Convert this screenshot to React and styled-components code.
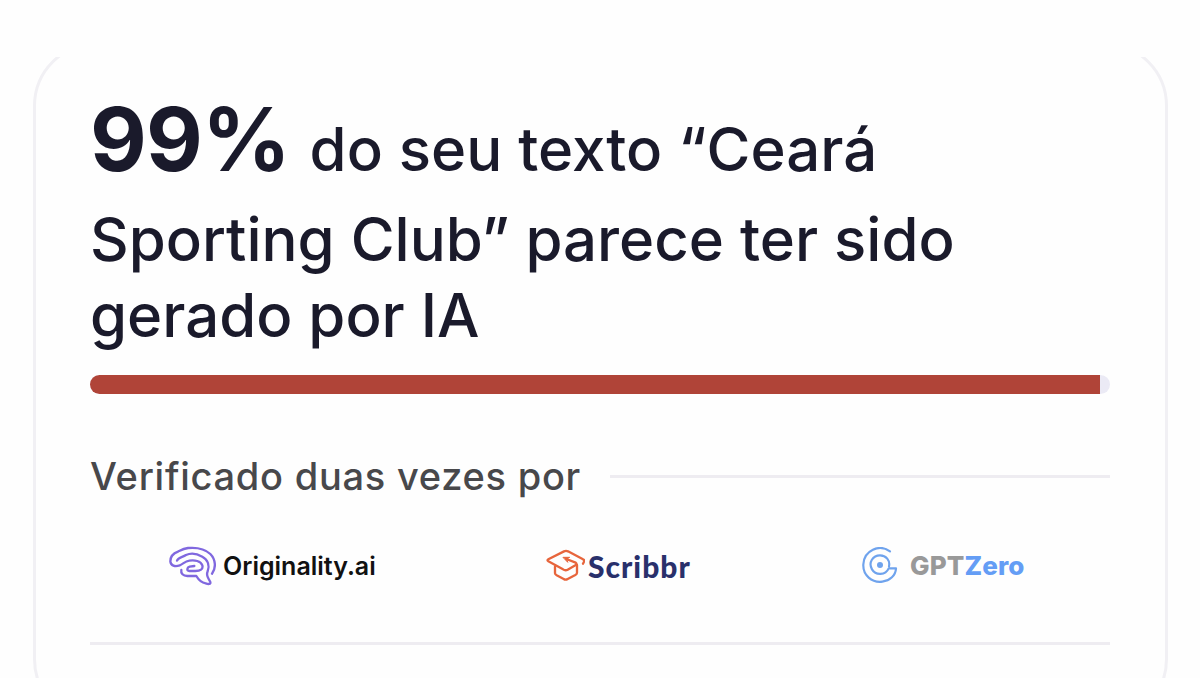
import React from 'react';
import styled, { createGlobalStyle } from 'styled-components';

const GlobalStyle = createGlobalStyle`
  body {
    margin: 0;
    background: #fefefe;
    font-family: Inter, 'Liberation Sans', sans-serif;
    overflow: hidden;
  }
`;

const Page = styled.main`
  box-sizing: border-box;
  height: 678px;
  padding-top: 57px;
`;

const Viewport = styled.div`
  height: 621px;
  overflow: hidden;
`;

const Card = styled.section`
  box-sizing: border-box;
  width: 1135px;
  height: 681px;
  margin: -15px 0 0 33px;
  padding: 33px 55px 0 54px;
  border: 3px solid #f1f0f4;
  border-radius: 64px;
`;

const Headline = styled.h1`
  margin: 0;
  color: #1a1a2b;
  font-size: 59.9px;
  font-weight: 500;
  line-height: 76px;
`;

const Line = styled.span`
  display: block;
  height: ${({ $height }) => $height || 76}px;
  line-height: ${({ $height }) => $height || 76}px;
  white-space: nowrap;
`;

const Score = styled.strong`
  margin-right: 3.5px;
  font-size: 87.5px;
  font-weight: 700;
  letter-spacing: -0.8px;
`;

const Track = styled.div`
  height: 19px;
  margin-top: 22px;
  border-radius: 10px;
  background: #ebeaf5;
  overflow: hidden;
`;

const Fill = styled.div`
  height: 100%;
  background: #b04438;
`;

const Divider = styled.div`
  flex: 1;
  height: 3px;
  background: #eeecf1;
`;

const VerifiedRow = styled.div`
  display: flex;
  align-items: center;
  gap: 29px;
  height: 48px;
  margin-top: 58px;
`;

const VerifiedLabel = styled.span`
  color: #48484b;
  font-size: 38px;
  font-weight: 450;
  letter-spacing: 0.74px;
  white-space: nowrap;
`;

const Logos = styled.div`
  display: grid;
  grid-template-columns: 377px 316px 1fr;
  align-items: center;
  height: 60px;
  margin: 36px 0 46px 79px;
`;

const Logo = styled.div`
  display: flex;
  align-items: center;
  height: 60px;

  svg {
    flex: none;
    fill: none;
    stroke-linecap: round;
    stroke-linejoin: round;
  }
`;

const Wordmark = styled.span`
  margin-left: ${({ $gap }) => $gap}px;
  color: ${({ $color }) => $color};
  font-family: ${({ $font }) => $font || 'Inter'}, sans-serif;
  font-size: ${({ $size }) => $size}px;
  font-weight: ${({ $weight }) => $weight};
  line-height: 32px;
  letter-spacing: ${({ $spacing }) => $spacing || 0}px;
  white-space: nowrap;
`;

const Accent = styled.span`
  color: #649df5;
`;

const BrainIcon = () => (
  <svg width="47" height="40" viewBox="25 22 141 120" stroke="#8068df" strokeWidth="7">
    <path d="M154 105C167 88 165 62 149 46C131 29 104 26 82 28C68 30 60 35 52 39C38 44 29 55 29 68C30 81 43 85 57 80C67 76 73 68 86 66C101 63 121 67 125 80C128 92 119 97 104 97H86C78 96 78 87 87 84L101 82" />
    <path d="M49 66C53 55 65 56 76 49C91 42 111 46 125 54C143 64 147 82 141 98C137 107 139 113 144 121L149 130C151 137 143 137 135 134C122 132 114 124 107 112H80C67 112 60 104 62 94" />
  </svg>
);

const CapIcon = () => (
  <svg width="39" height="34" viewBox="31 46 117 102" stroke="#e7653c" strokeWidth="7">
    <path d="M142 90L145 84Q147 79 142 77L97 53Q91 50 85 53L38 77Q33 80 38 83L82 107Q89 112 96 108L119 95Q125 91 120 87L92 76" />
    <path d="M58 99V119Q58 122 63 125L84 136Q90 140 96 136L119 124Q124 121 124 117V94" />
    <path d="M83 71L102 71L93 76L96 85Z" fill="#e7653c" strokeWidth="3" />
  </svg>
);

const TargetIcon = () => (
  <svg width="36" height="38" viewBox="36 36 108 114" stroke="#6fa3ed" strokeWidth="6.5">
    <path d="M120 49C88 26 42 46 40 88C38 121 66 144 97 140C120 137 137 121 138 100H116C107 121 77 122 66 103C54 82 69 61 90 61C108 61 121 76 117 94" />
    <circle cx="90" cy="90" r="9" fill="#6fa3ed" stroke="none" />
  </svg>
);

const ResultCard = ({ score }) => (
  <Card>
    <Headline>
      <Line $height={123}>
        <Score>{score}%</Score> do seu texto “Ceará
      </Line>
      <Line>Sporting Club” parece ter sido</Line>
      <Line>gerado por IA</Line>
    </Headline>
    <Track>
      <Fill style={{ width: `${score}%` }} />
    </Track>
    <VerifiedRow>
      <VerifiedLabel>Verificado duas vezes por</VerifiedLabel>
      <Divider />
    </VerifiedRow>
    <Logos>
      <Logo>
        <BrainIcon />
        <Wordmark $gap={7} $size={25} $weight={600} $color="#111">
          Originality.ai
        </Wordmark>
      </Logo>
      <Logo>
        <CapIcon />
        <Wordmark $gap={3} $size={30} $weight={900} $spacing={1} $color="#29306b" $font="Lato">
          Scribbr
        </Wordmark>
      </Logo>
      <Logo>
        <TargetIcon />
        <Wordmark $gap={12} $size={26} $weight={800} $spacing={0.1} $color="#999">
          GPT<Accent>Zero</Accent>
        </Wordmark>
      </Logo>
    </Logos>
    <Divider />
  </Card>
);

export default () => (
  <Page>
    <GlobalStyle />
    <Viewport>
      <ResultCard score={99} />
    </Viewport>
  </Page>
);
